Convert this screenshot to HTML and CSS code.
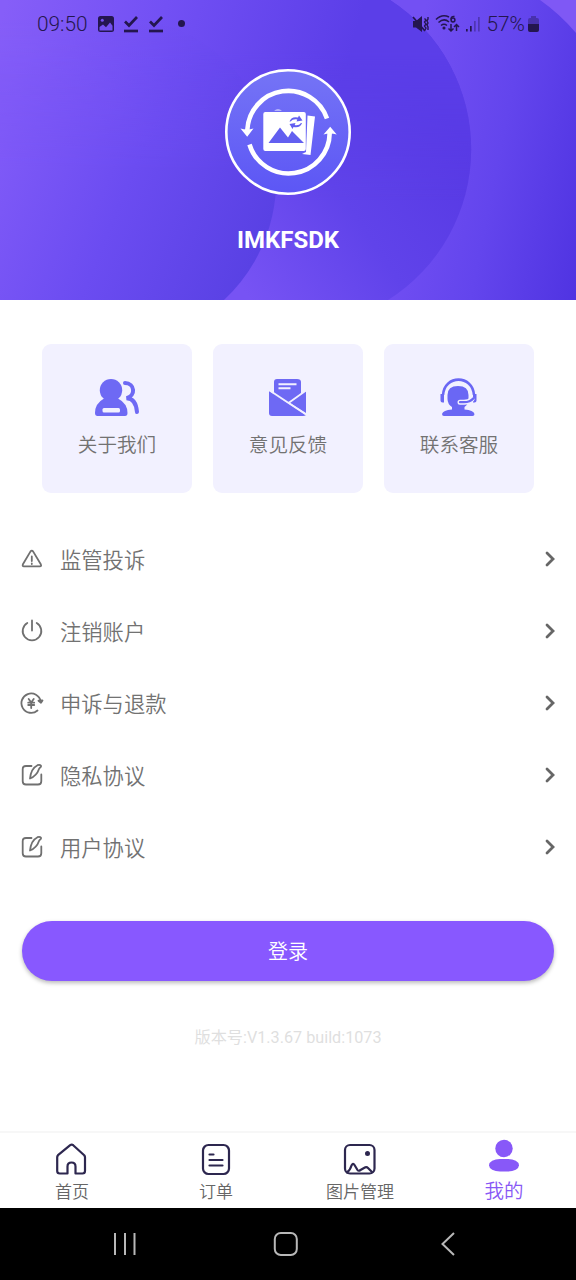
FILE: index.html
```html
<!DOCTYPE html>
<html lang="zh-CN">
<head>
<meta charset="utf-8">
<title>我的</title>
<link rel="stylesheet" href="styles.css">
</head>
<body>
<div class="screen">
  <header class="hero">
    <svg class="hero-bg" viewBox="0 0 576 300" preserveAspectRatio="none" aria-hidden="true">
      <defs>
        <linearGradient id="base" gradientUnits="userSpaceOnUse" x1="400" y1="130" x2="600" y2="170"><stop offset="0" stop-color="#7350f3"/><stop offset=".5" stop-color="#6345ed"/><stop offset="1" stop-color="#5034e2"/></linearGradient>
        <linearGradient id="outer" gradientUnits="userSpaceOnUse" x1="230" y1="270" x2="450" y2="120"><stop offset="0" stop-color="#7753f4"/><stop offset=".5" stop-color="#6043ea"/><stop offset="1" stop-color="#5739e4"/></linearGradient>
        <linearGradient id="left" gradientUnits="userSpaceOnUse" x1="0" y1="20" x2="330" y2="120"><stop offset="0" stop-color="#865ef8"/><stop offset=".45" stop-color="#7250f4"/><stop offset="1" stop-color="#5b3ee8"/></linearGradient>
        <linearGradient id="inner" gradientUnits="userSpaceOnUse" x1="0" y1="110" x2="270" y2="220"><stop offset="0" stop-color="#815bf8"/><stop offset=".5" stop-color="#6b4cf1"/><stop offset="1" stop-color="#5941e4"/></linearGradient>
        <linearGradient id="fade" gradientUnits="userSpaceOnUse" x1="0" y1="50" x2="0" y2="200"><stop offset="0" stop-color="#fff"/><stop offset="1" stop-color="#000"/></linearGradient>
        <linearGradient id="fade-in" gradientUnits="userSpaceOnUse" x1="0" y1="20" x2="0" y2="170"><stop offset="0" stop-color="#000"/><stop offset="1" stop-color="#fff"/></linearGradient>
        <mask id="top"><rect width="576" height="300" fill="url(#fade)"/></mask>
        <mask id="bottom"><rect width="576" height="300" fill="url(#fade-in)"/></mask>
      </defs>
      <rect width="576" height="300" fill="url(#base)"/>
      <path d="M0 0H390A178 178 0 0 1 388 300H0Z" fill="url(#outer)"/>
      <path d="M0 0H390A178 178 0 0 1 388 300H0Z" fill="url(#left)" mask="url(#top)"/>
      <path d="M0 0H112V16A164 164 0 0 1 224 300H0Z" fill="url(#inner)" mask="url(#bottom)"/>
      <path d="M540 0Q560 14 576 33V0Z" fill="#7f58f5"/>
    </svg>
    <div class="status">
      <div class="status-left">
        <span class="clock">09:50</span>
        <svg width="18" height="18" viewBox="0 0 18 18"><rect x="1" y="1" width="16" height="16" rx="2.500" fill="#24164f"/><circle cx="5.300" cy="5.200" r="1.500" fill="#7450f0"/><path d="m2.500 12 3.500-2.500 3 2.700 4-4.700 2.500 3.300V15.500h-13Z" fill="#7450f0"/></svg>
        <svg width="16" height="18" viewBox="0 0 16 18" class="check"><path d="m2 6.500 4 4L14 2" fill="none" stroke-width="2.700"/><path d="M1 16h14" stroke-width="2.700"/></svg>
        <svg width="16" height="18" viewBox="0 0 16 18" class="check"><path d="m2 6.500 4 4L14 2" fill="none" stroke-width="2.700"/><path d="M1 16h14" stroke-width="2.700"/></svg>
        <i class="dot"></i>
      </div>
      <div class="status-right">
        <svg width="18" height="18" viewBox="0 0 18 18"><path d="M1 6h3l6-5v16l-6-4.500H1Z" fill="#24164f"/><path d="m1 2 12 14" stroke="#24164f" stroke-width="1.700"/><path d="M12.500 3.500 14 5l-1.500 2L14 9l-1.500 2 1.500 2-1 2M16 2v2l-1 2 1 2-1 2 1 2v3" fill="none" stroke="#24164f" stroke-width="1.400"/></svg>
        <svg width="25" height="19" viewBox="0 0 25 19" fill="none" stroke="#24164f" stroke-width="1.500"><path d="M1 5.500Q7-.5 14 3M3.500 8.500Q9 3.500 14 8M6 11.500q3-2.500 6 0"/><circle cx="9" cy="14" r=".8" fill="#24164f"/><path d="M19.500 2.500c-2.500-.5-3.500 1-3.500 3"/><circle cx="18" cy="6" r="1.900"/><path d="M16 10v7m-2.500-2.500L16 17l2.500-2.500M21.500 17v-6.500M19 13l2.500-2.500L24 13"/></svg>
        <svg width="16" height="18" viewBox="0 0 16 18" fill="#24164f"><path d="M1 14h1.700v2.500H1ZM5 11h1.700v5.500H5Z"/><path d="M9 6h1.700v10.500H9ZM13 2h1.700v14.500H13Z" opacity=".38"/></svg>
        <span class="battery-text">57%</span>
        <svg width="13" height="18" viewBox="0 0 13 18"><path d="M4 1h5v2h1q2 0 2 2v4H1V5q0-2 2-2h1Z" fill="#24164f" opacity=".4"/><path d="M1 9h11v6q0 2-2 2H3q-2 0-2-2Z" fill="#24164f"/></svg>
      </div>
    </div>
    <svg class="avatar" width="126" height="126" viewBox="0 0 126 126">
      <defs><linearGradient id="av" x1="0" y1="0" x2="0" y2="1"><stop stop-color="#7574f6"/><stop offset="1" stop-color="#5c56f5"/></linearGradient></defs>
      <circle cx="63" cy="63" r="61.700" fill="url(#av)" stroke="#fff" stroke-width="2.600"/>
      <g fill="none" stroke="#fff" stroke-width="4.600"><path d="M102 49.500A41 41 0 0 0 22.300 61"/><path d="M24.500 75.500A41 41 0 0 0 104.700 64"/></g>
      <path d="M15.500 59.500Q22 61.500 28.500 59.500l-6.300 8.200ZM98.500 65.500l6.700-7.700 6.500 7.700Q105 63.500 98.500 65.500Z" fill="#fff"/>
      <path d="m82.500 46.500 7.500 1-4.500 38.500-8.500-1 4-2Z" fill="#fff"/>
      <path d="M49 41.500q4-2 8 0Z" fill="#fff"/>
      <rect x="38.300" y="43" width="42.500" height="39" rx="2" fill="#fff"/>
      <path d="M43.500 74 55 58.500l8 10 4-6.500 12 12Z" fill="#625ff0"/>
      <path d="M64.500 52.500q2-5.500 8.500-4l1-2 3.500 5-6 1 .8-2q-4.300-.8-6.800 2ZM77 54q-2 5.500-8.500 4l-1 2-3-5 6-1-.8 2q4.300.8 6.300-2Z" fill="#625ff0"/>
    </svg>
    <h1 class="name">IMKFSDK</h1>
  </header>

  <section class="cards">
    <a class="card">
      <svg width="46" height="40" viewBox="0 0 46 40" fill="#6e69f4"><circle cx="17" cy="12.200" r="11.200"/><path d="M10 20.500h14q9.500 5 9.500 14.500 0 3-2.500 3H3.500Q1 38 1 35 1 25.500 10 20.500Z"/><path d="M31 5c10 .2 11 13 1.500 15.200Q42 20.500 43 34" fill="none" stroke="#6e69f4" stroke-width="4" stroke-linecap="round"/><rect x="8.500" y="30" width="17.500" height="4.500" rx="1.500" fill="#f2f1ff"/></svg>
      <span>关于我们</span>
    </a>
    <a class="card">
      <svg width="40" height="40" viewBox="0 0 40 40" fill="#6e69f4"><path d="M6 17V4q0-3 3-3h20q4 0 4 3v13L20 25Z"/><path d="M10.500 6.300h18M10.500 10.300h12" stroke="#f2f1ff" stroke-width="2"/><path d="M1 13 38 37q-1 1-3 1H4q-3 0-3-3Z"/><path d="M38 12.800V35L21 24.300Z"/><path d="m1 12 37 24.500M20.500 25 38 12.500" stroke="#f2f1ff" stroke-width="1.800"/></svg>
      <span>意见反馈</span>
    </a>
    <a class="card">
      <svg width="40" height="40" viewBox="0 0 40 40" fill="#6a67f4"><path d="M4 17C5.500-3.500 33.500-3.500 35 17" fill="none" stroke="#6a67f4" stroke-width="2.600"/><path d="M1.500 16H5v8.500H3.500q-2 0-2-2ZM34 16h3.500v6.500q0 2-2 2H34Z"/><path d="M8.500 17q0-9 10.500-9t10.500 9v4q0 5-4 8v2.500q9 .5 10 4.500 0 2-2 2H5q-2 0-2-2 1-4 10-4.500V29q-4.500-3-4.500-8Z"/><path d="M21 24.200h4q5 0 8-3" fill="none" stroke="#f2f1ff" stroke-width="5" stroke-linecap="round"/><path d="M21 24.200h4q6 0 9.500-4" fill="none" stroke="#6a67f4" stroke-width="2.300" stroke-linecap="round"/></svg>
      <span>联系客服</span>
    </a>
  </section>

  <nav class="menu">
    <a class="row"><svg class="lead" viewBox="0 0 24 24"><path d="M10.400 4.600 2.900 17.300q-.8 2 1 2h15.900q2 0 1-2L13.200 4.600q-1.400-1.800-2.800 0Z"/><path d="M11.800 9.500v4.500M11.800 16.500v.5"/></svg><span>监管投诉</span><svg class="chev" viewBox="0 0 12 18"><path d="m3 3 6 6-6 6"/></svg></a>
    <a class="row"><svg class="lead" viewBox="0 0 24 24"><path d="M7.300 4a9.300 9.300 0 1 0 9.400 0M12 1.500v10"/></svg><span>注销账户</span><svg class="chev" viewBox="0 0 12 18"><path d="m3 3 6 6-6 6"/></svg></a>
    <a class="row"><svg class="lead" viewBox="0 0 24 24"><path d="M17.500 19.500A9.700 9.700 0 1 1 20.700 10.500M8.700 8l2.500 3.500L13.700 8M11.200 11.500v5.500M8.200 11.700h6M8.200 14h6"/><path d="m18.500 9.700 2.500 2 1.500-2.200Z" fill="#707070"/></svg><span>申诉与退款</span><svg class="chev" viewBox="0 0 12 18"><path d="m3 3 6 6-6 6"/></svg></a>
    <a class="row"><svg class="lead" viewBox="0 0 24 24"><path d="M11.500 3H6Q2.700 3 2.700 6.300v11.900q0 3.300 3.300 3.300h12q3.300 0 3.300-3.300V11.500M10 15.500c.5-5 3-11 7.500-13.300 2-.8 4 0 3.500 1.300-.3 1-1.500 1-2 2.500C17.500 10.500 15 13.500 10 15.500Z"/></svg><span>隐私协议</span><svg class="chev" viewBox="0 0 12 18"><path d="m3 3 6 6-6 6"/></svg></a>
    <a class="row"><svg class="lead" viewBox="0 0 24 24"><path d="M11.500 3H6Q2.700 3 2.700 6.300v11.900q0 3.300 3.300 3.300h12q3.300 0 3.300-3.300V11.500M10 15.500c.5-5 3-11 7.500-13.300 2-.8 4 0 3.500 1.300-.3 1-1.500 1-2 2.500C17.500 10.500 15 13.500 10 15.500Z"/></svg><span>用户协议</span><svg class="chev" viewBox="0 0 12 18"><path d="m3 3 6 6-6 6"/></svg></a>
  </nav>

  <button class="login">登录</button>
  <p class="version">版本号:V1.3.67 build:1073</p>

  <nav class="tabs">
    <a class="tab"><svg viewBox="0 0 34 34"><path d="M15.200 3.200 3 13.200q-.8 1-.8 2V29q0 2.500 2.500 2.500h7.800V24.500q0-4 4-4t4 4v7h7q2.500 0 2.500-2.500V15.200q0-1-.8-2l-11-10q-1.500-1.200-3 0Z"/></svg><span>首页</span></a>
    <a class="tab"><svg viewBox="0 0 34 34"><rect x="4" y="3" width="26" height="29" rx="5.500"/><path d="M10.500 12.500h4M10.500 18h13M10.500 23.500h13"/></svg><span>订单</span></a>
    <a class="tab"><svg viewBox="0 0 34 34"><rect x="2" y="3" width="29.500" height="28.500" rx="5"/><circle cx="24.500" cy="11.500" r="1.400" fill="#2d274f"/><path d="M4 30.500q3-2 4.500-7 1.500-3 3-.5l3 5q1 1.500 3 0l3.500-2q2.500-1.500 4 0l4 4"/></svg><span>图片管理</span></a>
    <a class="tab active"><svg viewBox="0 0 34 34"><circle cx="17" cy="9.500" r="8.700"/><rect x="2" y="20" width="30" height="12.500" rx="11" ry="6.200"/></svg><span>我的</span></a>
  </nav>
  <footer class="sysnav">
    <svg viewBox="0 0 28 28"><path d="M4 3v22M14 3v22M23.500 3v22"/></svg>
    <svg viewBox="0 0 28 28"><rect x="2.800" y="3" width="22" height="22" rx="6"/></svg>
    <svg viewBox="0 0 28 28"><path d="M20 3 8.500 14 20 25"/></svg>
  </footer>
</div>
</body>
</html>
```
FILE: styles.css
```css
* { box-sizing: border-box; }
body { margin: 0; background: #fff; }
.screen {
  width: 576px; height: 1280px; overflow: hidden;
  display: flex; flex-direction: column;
  font-family: Roboto, "Noto Sans CJK SC", sans-serif;
  color: #727272; background: #fff;
}
svg { display: block; flex: none; }
.hero {
  height: 300px; flex: none; position: relative; isolation: isolate;
  display: flex; flex-direction: column; align-items: center;
}
.hero-bg { position: absolute; inset: 0; width: 100%; height: 100%; z-index: -1; }
.status {
  width: 100%; height: 47px; padding: 0 36px 0 37px;
  display: flex; justify-content: space-between; align-items: center;
  color: #24164f; font-size: 20.8px; line-height: 24px; font-weight: 350;
}
.status-left, .status-right { display: flex; align-items: center; }
.clock { width: 60px; }
.status-left svg { margin-right: 8px; }
.status-left .check { margin-right: 9px; stroke: #24164f; }
.dot { width: 7px; height: 7px; margin-left: 5px; border-radius: 50%; background: #24164f; }
.status-right { gap: 5px; }
.battery-text { margin: 0 -3px 0 1px; }
.avatar { margin-top: 22px; }
.name { margin: 31px 0 0; font-size: 24px; line-height: 28px; font-weight: 700; color: #fff; }

.cards { display: flex; gap: 21px; padding: 44px 42px 0; flex: none; }
.card {
  width: 150px; height: 149px; padding-top: 34px; border-radius: 9px; background: #f2f1ff;
  display: flex; flex-direction: column; align-items: center;
  font-size: 19.6px; line-height: 28px; font-weight: 350;
}
.card span { margin-top: 14px; }

.menu { margin-top: 30px; flex: none; }
.row { height: 72px; padding: 0 20px; display: flex; align-items: center; font-size: 21.3px; line-height: 30px; font-weight: 350; }
.row span { flex: 1; margin-left: 16px; padding-top: 4px; }
.lead { width: 24px; height: 24px; fill: none; stroke: #707070; stroke-width: 1.8; stroke-linejoin: round; stroke-linecap: round; }
.chev { width: 12px; height: 18px; fill: none; stroke: #666; stroke-width: 2.8; stroke-linecap: round; }

.login {
  margin: 38px 22px 0; height: 60px; flex: none; padding: 3px 0 0; border: 0; border-radius: 30px;
  background: #8858ff; color: #fff; font: 350 20px/57px Roboto, "Noto Sans CJK SC", sans-serif;
  box-shadow: 0 2px 4px rgba(0, 0, 0, .28);
}
.version { margin: 45px 0 0; text-align: center; font-size: 16.2px; line-height: 24px; color: #dfdfdf; }

.tabs { margin-top: auto; height: 77px; flex: none; border-top: 2px solid #f7f7f7; display: grid; grid-template-columns: repeat(4, 1fr); }
.tab { display: flex; flex-direction: column; align-items: center; padding-top: 9px; font-size: 17px; line-height: 24px; font-weight: 350; color: #666; }
.tab svg { width: 34px; height: 34px; fill: none; stroke: #2d274f; stroke-width: 2.2; stroke-linecap: round; stroke-linejoin: round; }
.tab span { margin-top: 4px; }
.tab.active { padding-top: 6px; font-size: 19.5px; color: #8858f5; }
.tab.active span { margin-top: 7px; }
.tab.active svg { fill: #8858f8; stroke: none; }
.sysnav { height: 72px; flex: none; padding: 0 4px 1px 0; background: #000; display: flex; justify-content: center; align-items: center; gap: 133.5px; }
.sysnav svg { width: 28px; height: 28px; fill: none; stroke: #b8b8b8; stroke-width: 2; }
```
